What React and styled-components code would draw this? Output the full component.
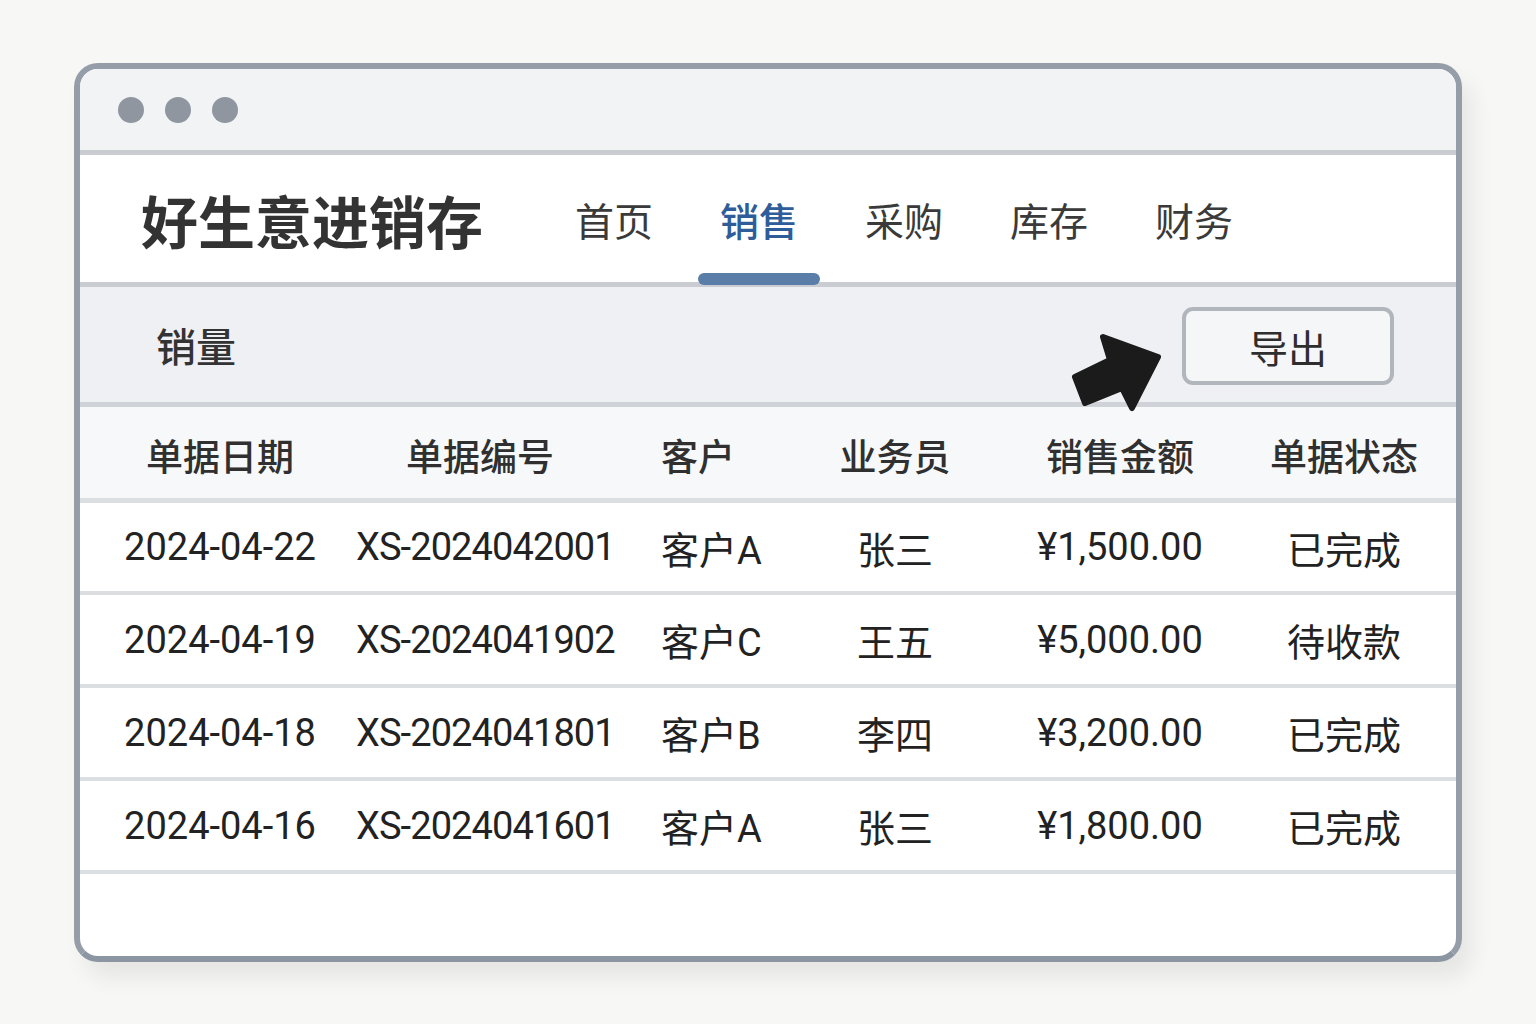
import React from "react";
import styled, { createGlobalStyle } from "styled-components";

const Global = createGlobalStyle`
  html, body { margin: 0; padding: 0; background: #f7f7f6; }
  body { font-family: "Roboto", "Noto Sans CJK SC", sans-serif; color: #2b2b2b; }
`;

const Page = styled.div`
  width: 1536px;
  height: 1024px;
  box-sizing: border-box;
  padding: 63px 0 0 74px;
`;

const Window = styled.div`
  width: 1388px;
  height: 899px;
  box-sizing: border-box;
  border: 6px solid #959ea8;
  border-bottom-color: #8c95a2;
  border-radius: 24px;
  background: #ffffff;
  overflow: hidden;
  display: flex;
  flex-direction: column;
  box-shadow: 10px 16px 22px rgba(0, 0, 0, 0.07);
`;

const TitleBar = styled.div`
  height: 81px;
  flex: none;
  background: #f1f3f5;
  display: flex;
  align-items: center;
  gap: 21px;
  padding-left: 38px;
  border-bottom: 5px solid #c9cdd1;
`;

const Dot = styled.span`
  width: 26px;
  height: 26px;
  border-radius: 50%;
  background: #8f96a0;
`;

const Header = styled.div`
  height: 127px;
  flex: none;
  display: flex;
  align-items: center;
  padding-left: 61px;
  border-bottom: 5px solid #c9cdd1;
  position: relative;
`;

const Brand = styled.div`
  font-size: 57px;
  font-weight: 700;
  color: #333333;
  margin-right: 70px;
`;

const Nav = styled.nav`
  display: flex;
  height: 100%;
  gap: 23px;
`;

const NavItem = styled.div`
  position: relative;
  width: 122px;
  height: 100%;
  display: flex;
  align-items: center;
  justify-content: center;
  font-size: 39px;
  color: ${(p) => (p.$active ? "#2e5d99" : "#3a3a3a")};
  font-weight: ${(p) => (p.$active ? 500 : 400)};
`;

const Underline = styled.span`
  position: absolute;
  left: 0;
  right: 0;
  bottom: -3px;
  height: 12px;
  border-radius: 6px;
  background: #5a7ea8;
`;

const Toolbar = styled.div`
  height: 115px;
  flex: none;
  background: #eef0f3;
  display: flex;
  align-items: center;
  justify-content: space-between;
  padding: 0 62px 0 76px;
  border-bottom: 5px solid #cfd3d7;
  position: relative;
`;

const ToolbarTitle = styled.div`
  font-size: 40px;
  font-weight: 500;
  color: #333;
`;

const ExportButton = styled.button`
  width: 212px;
  height: 78px;
  margin-top: 2px;
  box-sizing: border-box;
  border: 4px solid #b0b6bc;
  border-radius: 11px;
  background: #f4f6f8;
  font-family: "Roboto", "Noto Sans CJK SC", sans-serif;
  font-size: 39px;
  color: #2e2e2e;
  display: flex;
  align-items: center;
  justify-content: center;
  padding: 0;
`;

const Pointer = styled.svg`
  position: absolute;
  left: 990px;
  top: 43px;
  width: 95px;
  height: 85px;
  overflow: visible;
`;

const Grid = styled.div`
  display: grid;
  grid-template-columns: 240px 280px 180px 190px 260px 188px;
  padding-left: 20px;
  align-items: center;
  flex: none;
  box-sizing: border-box;
  border-bottom: ${(p) => (p.$head ? "5px" : "4px")} solid #dcdfe2;
`;

const HeadRow = styled(Grid)`
  height: 96px;
  background: #f7f8f9;
`;

const BodyRow = styled(Grid)`
  height: ${(p) => p.$h}px;
  background: #ffffff;
`;

const Cell = styled.div`
  text-align: ${(p) => (p.$pad != null ? "left" : "center")};
  padding-left: ${(p) => (p.$pad != null ? `${p.$pad}px` : "0")};
  letter-spacing: ${(p) => (p.$tight ? "-0.9px" : "0")};
  white-space: nowrap;
  font-size: ${(p) => (p.$head ? "37px" : "38px")};
  font-weight: ${(p) => (p.$head ? 500 : 400)};
  color: ${(p) => (p.$head ? "#303030" : "#222222")};
  padding-top: ${(p) => (p.$head ? "5px" : "0")};
`;

const cols = [
  { title: "单据日期" },
  { title: "单据编号", bodyPad: 16, tight: true },
  { title: "客户", headPad: 41, bodyPad: 41 },
  { title: "业务员" },
  { title: "销售金额" },
  { title: "单据状态" },
];
const rows = [
  ["2024-04-22", "XS-2024042001", "客户A", "张三", "¥1,500.00", "已完成"],
  ["2024-04-19", "XS-2024041902", "客户C", "王五", "¥5,000.00", "待收款"],
  ["2024-04-18", "XS-2024041801", "客户B", "李四", "¥3,200.00", "已完成"],
  ["2024-04-16", "XS-2024041601", "客户A", "张三", "¥1,800.00", "已完成"],
];
const navs = ["首页", "销售", "采购", "库存", "财务"];

export default function App() {
  return (
    <Page>
      <Global />
      <Window>
        <TitleBar>
          <Dot />
          <Dot />
          <Dot />
        </TitleBar>
        <Header>
          <Brand>好生意进销存</Brand>
          <Nav>
            {navs.map((n) => (
              <NavItem key={n} $active={n === "销售"}>
                {n}
                {n === "销售" && <Underline />}
              </NavItem>
            ))}
          </Nav>
        </Header>
        <Toolbar>
          <ToolbarTitle>销量</ToolbarTitle>
          <ExportButton>导出</ExportButton>
          <Pointer viewBox="0 0 95 85">
            <polygon
              points="5,47 40,30 33,7 88,27 62,78 52,58 15,73"
              fill="#1b1b1b"
              stroke="#1b1b1b"
              strokeWidth="6"
              strokeLinejoin="round"
            />
          </Pointer>
        </Toolbar>
        <HeadRow $head>
          {cols.map((c) => (
            <Cell key={c.title} $head $pad={c.headPad}>
              {c.title}
            </Cell>
          ))}
        </HeadRow>
        {rows.map((r, ri) => (
          <BodyRow key={ri} $h={ri === 0 ? 92 : 93}>
            {r.map((v, i) => (
              <Cell key={i} $pad={cols[i].bodyPad} $tight={cols[i].tight}>
                {v}
              </Cell>
            ))}
          </BodyRow>
        ))}
      </Window>
    </Page>
  );
}
